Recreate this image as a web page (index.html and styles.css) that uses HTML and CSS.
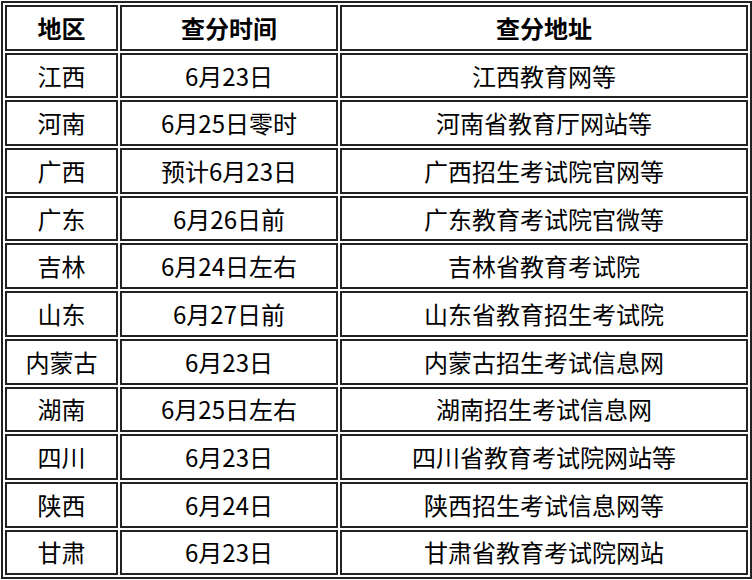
FILE: index.html
```html
<!DOCTYPE html>
<html lang="zh">
<head>
<meta charset="utf-8">
<link rel="stylesheet" href="styles.css">
</head>
<body>
<table class="score-table">
  <thead>
    <tr><th class="c1">地区</th><th class="c2">查分时间</th><th class="c3">查分地址</th></tr>
  </thead>
  <tbody>
    <tr><td>江西</td><td>6月23日</td><td>江西教育网等</td></tr>
    <tr><td>河南</td><td>6月25日零时</td><td>河南省教育厅网站等</td></tr>
    <tr><td>广西</td><td>预计6月23日</td><td>广西招生考试院官网等</td></tr>
    <tr><td>广东</td><td>6月26日前</td><td>广东教育考试院官微等</td></tr>
    <tr><td>吉林</td><td>6月24日左右</td><td>吉林省教育考试院</td></tr>
    <tr><td>山东</td><td>6月27日前</td><td>山东省教育招生考试院</td></tr>
    <tr><td>内蒙古</td><td>6月23日</td><td>内蒙古招生考试信息网</td></tr>
    <tr><td>湖南</td><td>6月25日左右</td><td>湖南招生考试信息网</td></tr>
    <tr><td>四川</td><td>6月23日</td><td>四川省教育考试院网站等</td></tr>
    <tr><td>陕西</td><td>6月24日</td><td>陕西招生考试信息网等</td></tr>
    <tr><td>甘肃</td><td>6月23日</td><td>甘肃省教育考试院网站</td></tr>
  </tbody>
</table>
</body>
</html>
```
FILE: styles.css
```css
html, body {
  margin: 0;
  padding: 0;
  background: #fff;
}
body {
  padding: 1px 0 0 1px;
  font-family: "Noto Sans CJK SC", "Noto Sans", sans-serif;
  color: #000;
}
.score-table {
  border: 2px solid #222;
  border-spacing: 2px;
  width: 751px;
  table-layout: fixed;
}
.score-table th,
.score-table td {
  border: 2px solid #222;
  height: 41.7px;
  padding: 0;
  text-align: center;
  vertical-align: middle;
  font-size: 24px;
  line-height: 28px;
  font-weight: normal;
}
.score-table th {
  font-weight: bold;
}
.c1 { width: 109px; }
.c2 { width: 214px; }
.c3 { width: auto; }
```
